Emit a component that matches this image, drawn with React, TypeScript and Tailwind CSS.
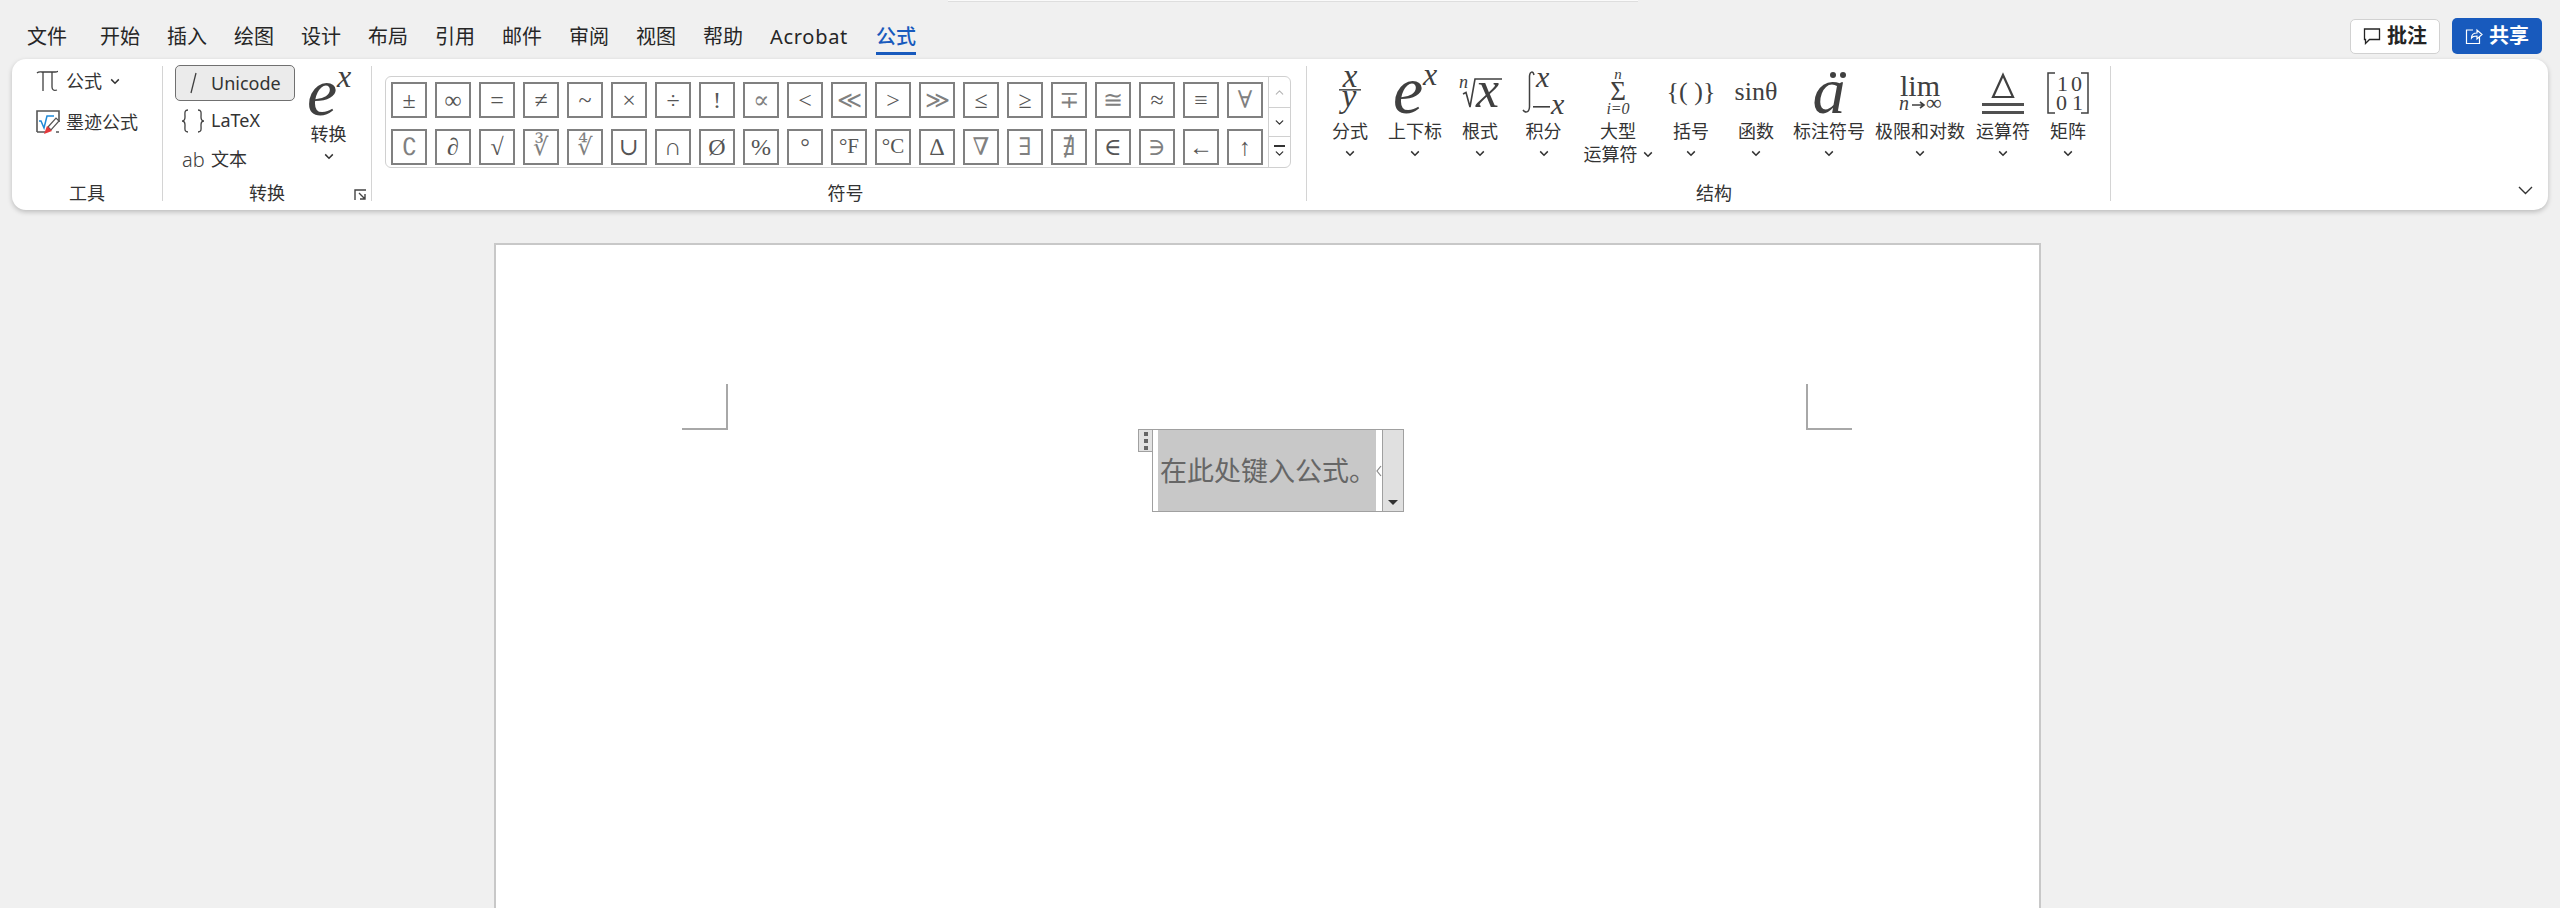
import { ChevronDown, ChevronUp } from "lucide-react"

const uiFont = "font-['Noto_Sans','Noto_Sans_CJK_SC',sans-serif]"
const mathFont = "Liberation Serif, DejaVu Serif, serif"

const tabs = ["开始", "插入", "绘图", "设计", "布局", "引用", "邮件", "审阅", "视图", "帮助"]

const rowOne = ["±", "∞", "=", "≠", "~", "×", "÷", "!", "∝", "<", "≪", ">", "≫", "≤", "≥", "∓", "≅", "≈", "≡", "∀"]
const rowTwo = ["∁", "∂", "√", "∛", "∜", "∪", "∩", "Ø", "%", "°", "°F", "°C", "∆", "∇", "∃", "∄", "∈", "∋", "←", "↑"]
// these come from the heavier fallback font, so they get a lighter colour
const heavySymbols = ["≪", "≫", "≅", "∓", "∛", "∜", "∁", "∇", "∃", "∄", "∋", "∀", "∝"]

function Caret({ className = "" }: { className?: string }) {
  return (
    <svg width="10" height="7" viewBox="0 0 10 7" className={className}>
      <path d="M1.2 1.4 L5 5.2 L8.8 1.4" fill="none" stroke="#333" strokeWidth="1.5" />
    </svg>
  )
}

function M({ x, y, s, i, a, children }: { x: number; y: number; s: number; i?: boolean; a?: "middle" | "start"; children: string }) {
  return (
    <text x={x} y={y} fontSize={s} fontFamily={mathFont} fontStyle={i ? "italic" : "normal"} textAnchor={a ?? "start"} fill="#404040">
      {children}
    </text>
  )
}

function Icon({ w, children }: { w: number; children: React.ReactNode }) {
  return (
    <svg width={w} height="46" viewBox={`0 0 ${w} 46`} className="block overflow-visible">
      {children}
    </svg>
  )
}

function PowerIcon() {
  return (
    <Icon w={46}>
      <M x={1} y={44} s={68} i>e</M>
      <M x={31} y={16} s={32} i>x</M>
    </Icon>
  )
}

const structures = [
  {
    label: "分式",
    width: "w-[64px]",
    icon: (
      <Icon w={30}>
        <M x={15} y={18} s={33} i a="middle">x</M>
        <rect x="4" y="20" width="22" height="1.6" fill="#555" />
        <M x={14} y={38} s={33} i a="middle">y</M>
      </Icon>
    ),
  },
  {
    label: "上下标",
    width: "w-[66px]",
    icon: <PowerIcon />,
  },
  {
    label: "根式",
    width: "w-[64px]",
    icon: (
      <Icon w={46}>
        <M x={2} y={19} s={18} i>n</M>
        <path d="M6 25 L9 23.5 L13 38 L18 10 H45" fill="none" stroke="#404040" strokeWidth="1.6" />
        <M x={19} y={38} s={52} i>x</M>
      </Icon>
    ),
  },
  {
    label: "积分",
    width: "w-[63px]",
    icon: (
      <Icon w={46}>
        <path d="M13 6 C12 2 9 2 8.5 7 V38 C8 44 4 44 2 41" fill="none" stroke="#404040" strokeWidth="1.5" />
        <M x={15} y={18} s={30} i>x</M>
        <rect x="12" y="37" width="17" height="1.6" fill="#404040" />
        <M x={30} y={45} s={30} i>x</M>
      </Icon>
    ),
  },
  {
    label: "大型\n运算符",
    width: "w-[86px]",
    icon: (
      <Icon w={30}>
        <M x={15} y={10} s={15} i a="middle">n</M>
        <M x={15} y={31} s={27} a="middle">Σ</M>
        <M x={15} y={45} s={16} i a="middle">i=0</M>
      </Icon>
    ),
  },
  {
    label: "括号",
    width: "w-[60px]",
    icon: (
      <Icon w={44}>
        <M x={22} y={31} s={26} a="middle">{"{( )}"}</M>
      </Icon>
    ),
  },
  {
    label: "函数",
    width: "w-[70px]",
    icon: (
      <Icon w={44}>
        <M x={22} y={31} s={26} a="middle">sinθ</M>
      </Icon>
    ),
  },
  {
    label: "标注符号",
    width: "w-[76px]",
    icon: (
      <Icon w={40}>
        <M x={20} y={44} s={66} i a="middle">a</M>
        <circle cx="24" cy="6" r="3" fill="#404040" />
        <circle cx="34" cy="6" r="3" fill="#404040" />
      </Icon>
    ),
  },
  {
    label: "极限和对数",
    width: "w-[106px]",
    icon: (
      <Icon w={46}>
        <M x={23} y={27} s={30} a="middle">lim</M>
        <M x={2} y={41} s={20} i>n</M>
        <path d="M15 36 H27 M23 33 L27 36 L23 39" fill="none" stroke="#404040" strokeWidth="1.6" />
        <M x={29} y={41} s={22}>∞</M>
      </Icon>
    ),
  },
  {
    label: "运算符",
    width: "w-[60px]",
    icon: (
      <Icon w={44}>
        <path d="M22 6 L32 28 H12 Z" fill="none" stroke="#404040" strokeWidth="2.2" />
        <rect x="1" y="34" width="42" height="3" fill="#505050" />
        <rect x="1" y="42" width="42" height="3" fill="#505050" />
      </Icon>
    ),
  },
  {
    label: "矩阵",
    width: "w-[70px]",
    icon: (
      <Icon w={44}>
        <path d="M9 4 H2 V44 H9 M35 4 H42 V44 H35" fill="none" stroke="#404040" strokeWidth="1.5" />
        <M x={11} y={22} s={22}>1</M>
        <M x={25} y={22} s={22}>0</M>
        <M x={10} y={41} s={22}>0</M>
        <M x={26} y={41} s={22}>1</M>
      </Icon>
    ),
  },
]

function GroupLabel({ children }: { children: React.ReactNode }) {
  return <div className="h-[20px] translate-y-[2px] text-center text-[18px] leading-[20px] text-[#333]">{children}</div>
}

function SymbolCell({ symbol }: { symbol: string }) {
  const color = heavySymbols.includes(symbol) ? "text-[#808080]" : "text-[#555]"
  const size = symbol.length > 1 ? "text-[21px]" : "text-[24px]"
  return (
    <div className={`flex h-[36px] w-[36px] items-center justify-center border-2 border-[#808080] bg-white font-['Liberation_Serif','DejaVu_Serif',serif] leading-none ${size} ${color}`}>
      {symbol}
    </div>
  )
}

export default function App() {
  return (
    <div className={`relative flex h-[908px] w-[2560px] flex-col overflow-hidden bg-[#f0f0f0] ${uiFont}`}>
      <div className="absolute left-[948px] top-0 h-[2px] w-[690px] border-b border-[#dedede] bg-[#fafafa]" />

      <div className="flex h-[59px] items-start pt-[22px] pl-[27px] pr-[12px] text-[20px] leading-[30px] text-[#262626]">
        <span className="mr-[33px]">文件</span>
        <div className="flex gap-[27px]">
          {tabs.map((tab) => (
            <span key={tab}>{tab}</span>
          ))}
          <span className="tracking-[0.7px]">Acrobat</span>
        </div>
        <span className="ml-[28px] border-b-[3px] border-[#185abd] font-medium text-[#185abd]">公式</span>
        <div className="ml-auto flex items-center gap-[12px] pr-[6px] -mt-[4px]">
          <button className="flex h-[35px] w-[90px] items-center justify-center gap-[6px] rounded-[5px] border border-[#d1d1d1] bg-white font-bold text-[#242424]">
            <svg width="18" height="18" viewBox="0 0 18 18">
              <path d="M1.5 2 H16.5 V12.5 H6.5 L2.5 16.5 V12.5 H1.5 Z" fill="none" stroke="#242424" strokeWidth="1.3" />
            </svg>
            批注
          </button>
          <button className="flex h-[36px] w-[90px] items-center justify-center gap-[6px] rounded-[5px] bg-[#185abd] font-bold text-white">
            <svg width="18" height="18" viewBox="0 0 18 18">
              <path d="M8 3 H1.5 V16.5 H14.5 V10 M6.5 11 C6.5 7 9 6 12 6 V3 L17 7.5 L12 12 V9 C9.5 9 7.5 9.5 6.5 11 Z" fill="none" stroke="#fff" strokeWidth="1.2" />
            </svg>
            共享
          </button>
        </div>
      </div>

      <div className="mx-[12px] flex h-[151px] w-[2536px] shrink-0 rounded-[14px] bg-white pt-[7px] text-[18px] text-[#333] shadow-[0_2px_5px_rgba(0,0,0,0.22)]">
        {/* 工具 */}
        <div className="flex h-[135px] w-[151px] shrink-0 flex-col justify-between border-r border-[#d4d4d4]">
          <div className="flex flex-col gap-[18px] pl-[24px] pt-[4px]">
            <div className="flex h-[22px] items-center leading-none">
              <svg width="22" height="22" viewBox="0 0 22 22" className="mr-[8px] shrink-0">
                <path d="M1 3 C2.5 1.5 4 2 6 2 H19 C20.5 2 21.5 2 22 1 M7 2 V21 M16 2 V17 C16 20 18 21 21 20" fill="none" stroke="#404040" strokeWidth="1.3" />
              </svg>
              公式
              <Caret className="ml-[8px]" />
            </div>
            <div className="flex h-[24px] items-center leading-none">
              <svg width="24" height="24" viewBox="0 0 24 24" className="mr-[6px] shrink-0">
                <path d="M1 22 V1 H23 V12 M1 22 H9 M20 22 H23" fill="none" stroke="#555" strokeWidth="1.6" />
                <path d="M3 11 L5 11 L8 18 L11 6 H18" fill="none" stroke="#1e88d6" strokeWidth="1.5" />
                <path d="M12 17 L20 8 L23 11 L15 20 Z" fill="#fff" stroke="#555" strokeWidth="1.2" />
                <path d="M8 24 L11 16 L16 21 Z" fill="#e5383b" />
              </svg>
              墨迹公式
            </div>
          </div>
          <GroupLabel>工具</GroupLabel>
        </div>

        {/* 转换 */}
        <div className="flex h-[135px] w-[209px] shrink-0 flex-col justify-between border-r border-[#d4d4d4]">
          <div className="flex pl-[12px] -mt-[1px]">
            <div className="flex w-[120px] flex-col">
              <div className="flex h-[36px] items-center rounded-[5px] border border-[#707070] bg-[#ebebeb]">
                <svg width="35" height="22" viewBox="0 0 35 22" className="shrink-0">
                  <path d="M15 21 L20 1" fill="none" stroke="#404040" strokeWidth="1.3" />
                </svg>
                Unicode
              </div>
              <div className="flex h-[39px] items-center">
                <svg width="36" height="26" viewBox="0 0 36 26" className="shrink-0">
                  <path d="M13 2 C9 2 10 5 10 9 C10 11 10 13 7 13 C10 13 10 15 10 17 C10 21 9 24 13 24 M23 2 C27 2 26 5 26 9 C26 11 26 13 29 13 C26 13 26 15 26 17 C26 21 27 24 23 24" fill="none" stroke="#404040" strokeWidth="1.3" />
                </svg>
                LaTeX
              </div>
              <div className="flex h-[39px] items-center">
                <span className="ml-[7px] w-[29px] text-[20px] font-light leading-none text-[#404040]">ab</span>
                文本
              </div>
            </div>
            <div className="flex w-[66px] flex-col items-center pl-[1px] pt-[6px]">
              <PowerIcon />
              <span className="mt-[5px] leading-[24px]">转换</span>
              <Caret className="mt-[7px]" />
            </div>
          </div>
          <div className="relative">
            <GroupLabel>转换</GroupLabel>
            <svg width="13" height="12" viewBox="0 0 13 12" className="absolute bottom-0 right-[4px]">
              <path d="M1 11 V1 H12 M5 4 L11 10 M11 5 V10 H6" fill="none" stroke="#444" strokeWidth="1.4" />
            </svg>
          </div>
        </div>

        {/* 符号 */}
        <div className="flex h-[135px] w-[935px] shrink-0 flex-col justify-between border-r border-[#d4d4d4] pl-[13px]">
          <div className="mt-[10px] flex h-[92px] w-[906px] overflow-hidden rounded-[6px] border border-[#d0d0d0]">
            <div className="grid w-[883px] grid-cols-[repeat(20,36px)] gap-x-[8px] gap-y-[8px] px-[5px] pt-[5px]">
              {[...rowOne, ...rowTwo].map((symbol, i) => (
                <SymbolCell key={i} symbol={symbol} />
              ))}
            </div>
            <div className="flex w-[22px] flex-col border-l border-[#d0d0d0]">
              <div className="flex h-[31px] items-center justify-center border-b border-[#d0d0d0]">
                <ChevronUp size={13} strokeWidth={2} color="#b5b5b5" />
              </div>
              <div className="flex h-[29px] items-center justify-center border-b border-[#d0d0d0]">
                <ChevronDown size={13} strokeWidth={2.4} color="#333" />
              </div>
              <div className="flex flex-1 flex-col items-center justify-center">
                <div className="h-[2px] w-[11px] bg-[#333]" />
                <ChevronDown size={13} strokeWidth={2.4} color="#333" />
              </div>
            </div>
          </div>
          <GroupLabel>符号</GroupLabel>
        </div>

        {/* 结构 */}
        <div className="flex h-[135px] w-[804px] shrink-0 flex-col justify-between border-r border-[#d4d4d4] pl-[11px]">
          <div className="flex">
            {structures.map((item) => {
              const lines = item.label.split("\n")
              return (
                <div key={item.label} className={`flex ${item.width} shrink-0 flex-col items-center pt-[3px]`}>
                  <div className="flex h-[46px] items-center justify-center">{item.icon}</div>
                  <div className="mt-[4px] whitespace-nowrap leading-[24px]">{lines[0]}</div>
                  {lines[1] ? (
                    <div className="flex items-center whitespace-nowrap leading-[22px]">
                      {lines[1]}
                      <Caret className="ml-[5px]" />
                    </div>
                  ) : (
                    <Caret className="mt-[7px]" />
                  )}
                </div>
              )
            })}
          </div>
          <GroupLabel>结构</GroupLabel>
        </div>

        <div className="ml-auto flex items-end pb-[15px] pr-[15px]">
          <svg width="15" height="9" viewBox="0 0 15 9">
            <path d="M1 1 L7.5 7.5 L14 1" fill="none" stroke="#333" strokeWidth="1.4" />
          </svg>
        </div>
      </div>

      <div className="ml-[494px] mt-[33px] h-[665px] w-[1547px] shrink-0 border-x-2 border-t-2 border-[#c8c8c8] bg-white">
        <div className="flex justify-between pl-[186px] pr-[187px] pt-[139px]">
          <div className="h-[46px] w-[46px] border-b-2 border-r-2 border-[#a8a8a8]" />
          <div className="h-[46px] w-[46px] border-b-2 border-l-2 border-[#a8a8a8]" />
        </div>
        <div className="relative -mt-[1px] ml-[656px] flex h-[83px] w-[252px] border border-[#a0a0a0] bg-white">
          <div className="absolute -left-[15px] -top-[1px] flex h-[23px] w-[15px] flex-col items-center justify-center gap-[3px] border border-[#a0a0a0] bg-[#e2e2e2]">
            <span className="h-[4px] w-[4px] bg-[#666]" />
            <span className="h-[4px] w-[4px] bg-[#666]" />
            <span className="h-[4px] w-[4px] bg-[#666]" />
          </div>
          <div className="ml-[5px] flex w-[218px] items-center whitespace-nowrap bg-[#c8c8c8] pl-[2px] font-['Noto_Sans_CJK_SC',sans-serif] text-[27px] text-[#666]">
            在此处键入公式。
          </div>
          <div className="flex w-[6px] items-center">
            <svg width="6" height="12" viewBox="0 0 6 12">
              <path d="M5 1 L1 6 L5 11" fill="none" stroke="#888" strokeWidth="1.2" />
            </svg>
          </div>
          <div className="ml-auto flex w-[21px] items-end justify-center border-l border-[#a0a0a0] bg-[#e0e0e0] pb-[6px]">
            <div className="h-0 w-0 border-x-[5px] border-t-[5px] border-x-transparent border-t-[#333]" />
          </div>
        </div>
      </div>
    </div>
  )
}
